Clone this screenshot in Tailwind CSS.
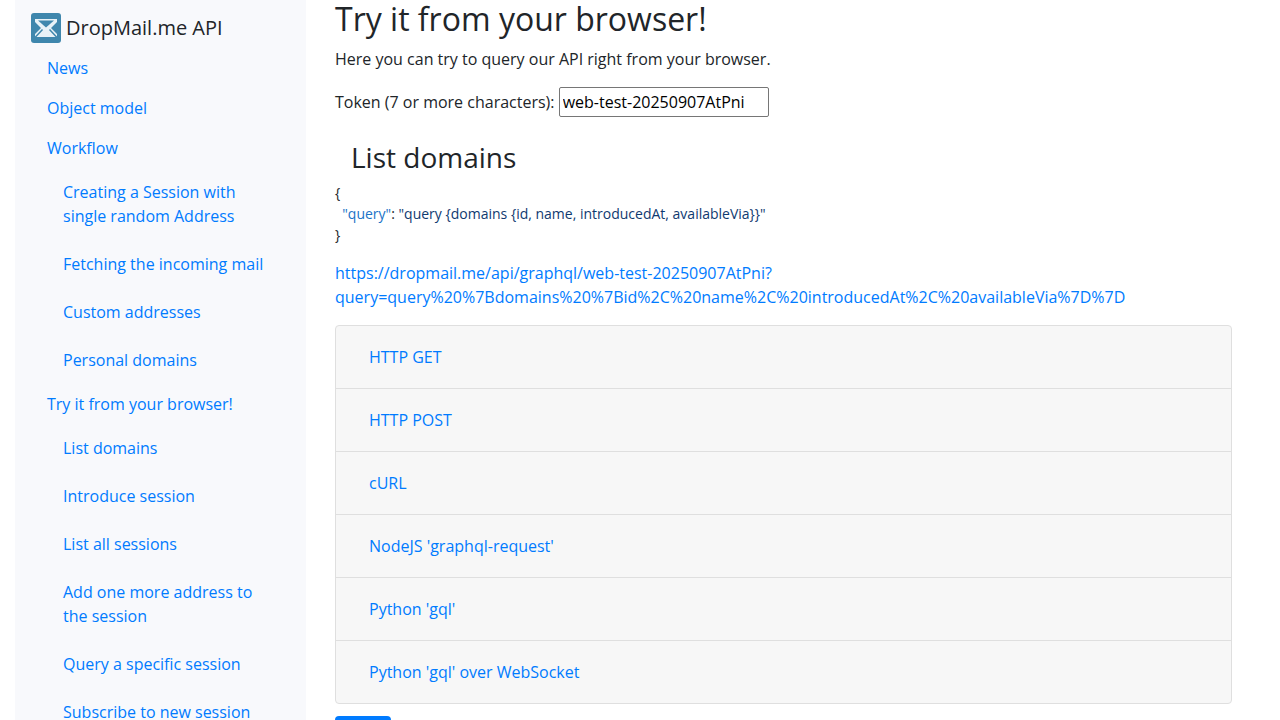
<!doctype html>
<html lang="en">
<head>
<meta charset="utf-8">
<title>DropMail.me API</title>
<script src="https://cdn.jsdelivr.net/npm/@tailwindcss/browser@4"></script>
</head>
<body class="h-[720px] overflow-hidden bg-white font-['Open_Sans',sans-serif] text-base leading-6 text-[#212529]">
<div class="flex h-[720px] overflow-hidden">
  <aside class="ml-[15px] h-[720px] w-[291px] shrink-0 overflow-hidden bg-[#f8f9fc] pl-4 pt-[13px]">
    <div class="flex h-[30px] items-center gap-[5px] text-xl">
      <svg class="h-[30px] w-[30px] shrink-0" viewBox="0 0 30 30">
        <rect width="30" height="30" rx="3" fill="#3f87ad"/>
        <path d="M4 6 H26 V24 H4 Z" fill="#e8f2f7"/>
        <path d="M7 7.5 15 14.5 23 7.5Z" fill="#3f87ad"/>
        <path d="M4 9V21L10 15ZM26 9V21L20 15Z" fill="#3f87ad"/>
        <path d="M4 24.5 11.5 16.5M26 24.5 18.5 16.5" fill="none" stroke="#3f87ad" stroke-width="1.5"/>
      </svg>
      <span>DropMail.me API</span>
    </div>
    <nav class="mt-[5px] text-[#007bff]">
      <a class="block px-4 py-2" href="#">News</a>
      <a class="block px-4 py-2" href="#">Object model</a>
      <a class="block px-4 py-2" href="#">Workflow</a>
      <div class="pl-4">
        <a class="block py-3 pl-4 pr-8" href="#">Creating a Session with single random Address</a>
        <a class="block py-3 pl-4 pr-8" href="#">Fetching the incoming mail</a>
        <a class="block py-3 pl-4 pr-8" href="#">Custom addresses</a>
        <a class="block py-3 pl-4 pr-8" href="#">Personal domains</a>
      </div>
      <a class="block px-4 py-2" href="#">Try it from your browser!</a>
      <div class="pl-4">
        <a class="block py-3 pl-4 pr-8" href="#">List domains</a>
        <a class="block py-3 pl-4 pr-8" href="#">Introduce session</a>
        <a class="block py-3 pl-4 pr-8" href="#">List all sessions</a>
        <a class="block py-3 pl-4 pr-8" href="#">Add one more address to the session</a>
        <a class="block py-3 pl-4 pr-8" href="#">Query a specific session</a>
        <a class="block py-3 pl-4 pr-8" href="#">Subscribe to new session</a>
      </div>
    </nav>
  </aside>
  <main class="ml-[29px] w-[897px] shrink-0">
    <h1 class="text-[32px] leading-[38.4px] font-normal">Try it from your browser!</h1>
    <p class="mt-[9px]">Here you can try to query our API right from your browser.</p>
    <p class="mt-4 h-[30px]">Token (7 or more characters): <input class="h-[30px] w-[210px] rounded-[2px] border border-[#767676] px-[3px] text-black" value="web-test-20250907AtPni"></p>
    <h2 class="mt-[23px] pl-4 text-[28px] leading-[34px] font-normal">List domains</h2>
    <pre class="mt-2 font-['Open_Sans',sans-serif] text-sm leading-[21px] text-[#0f3a70]"><span class="text-[#212529]">{</span>
  <span class="text-[#1a73c7]">"query"</span><span class="text-[#212529]">:</span> "query {domains {id, name, introducedAt, availableVia}}"
<span class="text-[#212529]">}</span></pre>
    <a class="mt-4 block break-all text-[#007bff]" href="#">https://dropmail.me/api/graphql/web-test-20250907AtPni?<br>query=query%20%7Bdomains%20%7Bid%2C%20name%2C%20introducedAt%2C%20availableVia%7D%7D</a>
    <div class="mt-4 overflow-hidden rounded-[4px] border border-[#dfdfdf] bg-[#f7f7f7] text-[#007bff]">
      <div class="h-[63px] border-b border-[#dfdfdf] px-[33px] py-[19px]">HTTP GET</div>
      <div class="h-[63px] border-b border-[#dfdfdf] px-[33px] py-[19px]">HTTP POST</div>
      <div class="h-[63px] border-b border-[#dfdfdf] px-[33px] py-[19px]">cURL</div>
      <div class="h-[63px] border-b border-[#dfdfdf] px-[33px] py-[19px]">NodeJS 'graphql-request'</div>
      <div class="h-[63px] border-b border-[#dfdfdf] px-[33px] py-[19px]">Python 'gql'</div>
      <div class="h-[62px] px-[33px] py-[19px]">Python 'gql' over WebSocket</div>
    </div>
    <button class="mt-3 h-[38px] w-14 rounded-[4px] bg-[#007bff] text-white">Run</button>
  </main>
</div>
</body>
</html>
